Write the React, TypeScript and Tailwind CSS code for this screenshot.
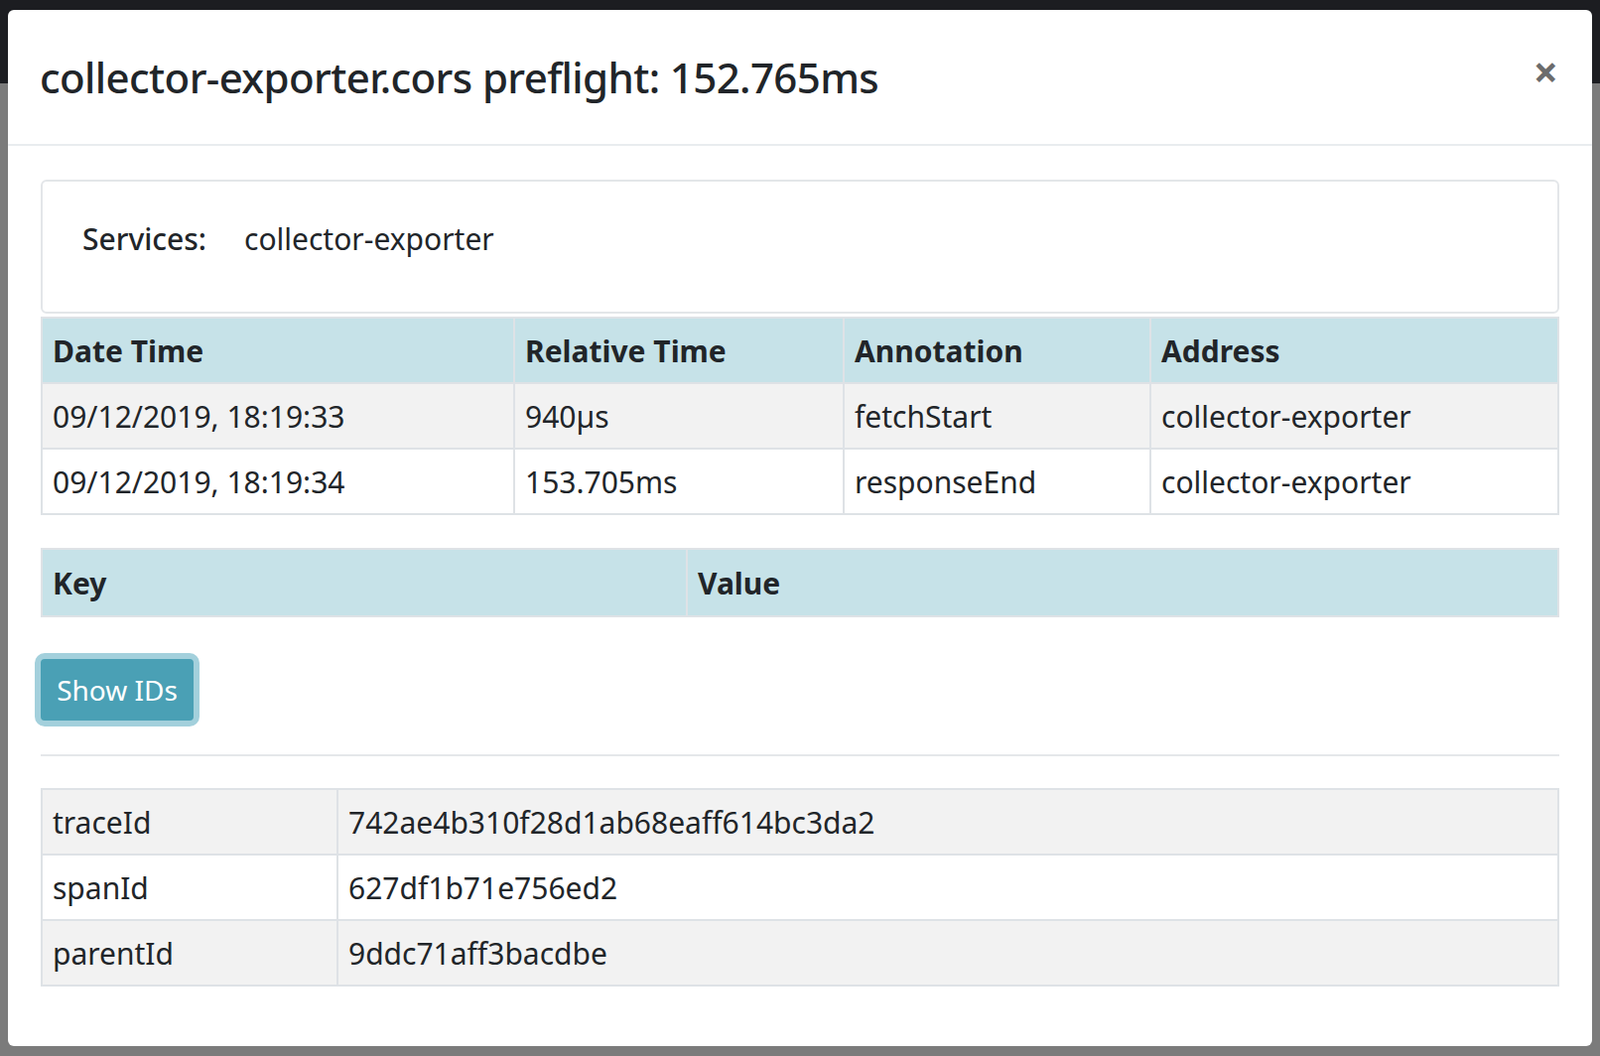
export default function App() {
  const events = [
    ['09/12/2019, 18:19:33', '940µs', 'fetchStart', 'collector-exporter'],
    ['09/12/2019, 18:19:34', '153.705ms', 'responseEnd', 'collector-exporter'],
  ]
  const ids = [
    ['traceId', '742ae4b310f28d1ab68eaff614bc3da2'],
    ['spanId', '627df1b71e756ed2'],
    ['parentId', '9ddc71aff3bacdbe'],
  ]
  return (
    <div className="relative h-[1064px] w-[1612px] overflow-hidden bg-[#7b7b7b] font-[Inter,'Liberation_Sans',sans-serif] text-[#212529]">
      <div className="h-[84px] bg-[#1c1d21]" />
      <div className="absolute left-[8px] top-[10px] h-[1044px] w-[1596px] rounded-md bg-white">
        <div className="flex h-[137px] items-center justify-between border-b-2 border-[#e9ecef] pl-[32px] pr-[34px]">
          <h4 className="text-[42px] font-medium tracking-[-0.6px]">collector-exporter.cors preflight: 152.765ms</h4>
          <span className="mb-[12px] text-[44px] font-bold leading-none text-[#6c6c6c]">×</span>
        </div>
        <div className="px-[33px] pt-[34px]">
          <div className="flex h-[135px] items-center gap-[38px] rounded-md border-2 border-[#e3e6e9] px-[40px] pb-[16px] text-[30px]">
            <span className="font-medium">Services:</span>
            <span>collector-exporter</span>
          </div>
          <table className="mt-[3px] w-full border-collapse text-[30px]">
            <thead>
              <tr className="h-[66px] bg-[#c6e2e8] text-left">
                <th className="w-[476px] border-2 border-[#dee2e6] px-[10px] font-bold">Date Time</th>
                <th className="w-[332px] border-2 border-[#dee2e6] px-[10px] font-bold">Relative Time</th>
                <th className="w-[309px] border-2 border-[#dee2e6] px-[10px] font-bold">Annotation</th>
                <th className="border-2 border-[#dee2e6] px-[10px] font-bold">Address</th>
              </tr>
            </thead>
            <tbody>
              {events.map((r, i) => (
                <tr key={i} className={i % 2 === 0 ? 'h-[66px] bg-[#f2f2f2]' : 'h-[66px] bg-white'}>
                  {r.map((c, j) => (
                    <td key={j} className="border-2 border-[#dee2e6] px-[10px]">{c}</td>
                  ))}
                </tr>
              ))}
            </tbody>
          </table>
          <table className="mt-[33px] w-full border-collapse text-[30px]">
            <thead>
              <tr className="h-[68px] bg-[#c6e2e8] text-left">
                <th className="w-[650px] border-2 border-[#dee2e6] px-[10px] font-bold">Key</th>
                <th className="border-2 border-[#dee2e6] px-[10px] font-bold">Value</th>
              </tr>
            </thead>
          </table>
          <button className="-ml-[6px] mt-[36px] h-[74px] w-[166px] rounded-[10px] border-[6px] border-[#a3d0dc] bg-[#4aa0b5] text-[28px] text-white">
            Show IDs
          </button>
          <div className="mt-[28px] border-t-2 border-[#e5e7ea]" />
          <table className="mt-[32px] w-full border-collapse text-[30px]">
            <tbody>
              {ids.map((r, i) => (
                <tr key={i} className={i % 2 === 0 ? 'h-[66px] bg-[#f2f2f2]' : 'h-[66px] bg-white'}>
                  <td className="w-[298px] border-2 border-[#dee2e6] px-[10px]">{r[0]}</td>
                  <td className="border-2 border-[#dee2e6] px-[10px]">{r[1]}</td>
                </tr>
              ))}
            </tbody>
          </table>
        </div>
      </div>
    </div>
  )
}
